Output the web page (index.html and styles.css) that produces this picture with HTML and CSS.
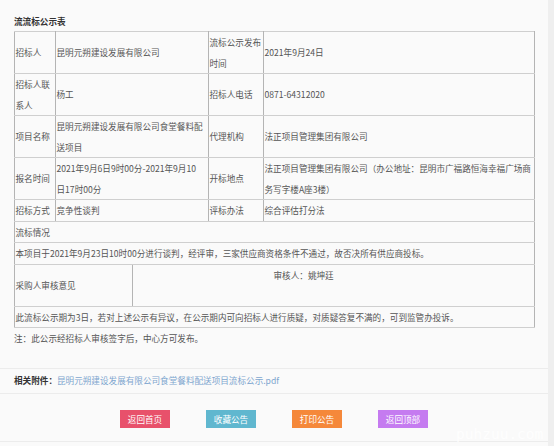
FILE: index.html
```html
<!DOCTYPE html>
<html lang="zh-CN">
<head>
<meta charset="utf-8">
<title>流流标公示表</title>
<link rel="stylesheet" href="styles.css">
</head>
<body>
<div class="page">
  <div class="content">
    <h2 class="title">流流标公示表</h2>
    <table class="notice">
      <colgroup>
        <col class="c1"><col class="c2"><col class="c3"><col class="c4">
      </colgroup>
      <tr>
        <td>招标人</td>
        <td>昆明元朔建设发展有限公司</td>
        <td>流标公示发布时间</td>
        <td>2021年9月24日</td>
      </tr>
      <tr>
        <td>招标人联系人</td>
        <td>杨工</td>
        <td>招标人电话</td>
        <td>0871-64312020</td>
      </tr>
      <tr>
        <td>项目名称</td>
        <td>昆明元朔建设发展有限公司食堂餐料配送项目</td>
        <td>代理机构</td>
        <td>法正项目管理集团有限公司</td>
      </tr>
      <tr>
        <td>报名时间</td>
        <td>2021年9月6日9时00分-2021年9月10<br>日17时00分</td>
        <td>开标地点</td>
        <td>法正项目管理集团有限公司（办公地址：昆明市广福路恒海幸福广场商务写字楼A座3楼）</td>
      </tr>
      <tr>
        <td>招标方式</td>
        <td>竞争性谈判</td>
        <td>评标办法</td>
        <td>综合评估打分法</td>
      </tr>
      <tr>
        <td colspan="4">流标情况</td>
      </tr>
      <tr>
        <td colspan="4">本项目于2021年9月23日10时00分进行谈判，经评审，三家供应商资格条件不通过，故否决所有供应商投标。</td>
      </tr>
      <tr>
        <td colspan="4" class="nest">
          <div class="review">
            <div class="review-label">采购人审核意见</div>
            <div class="review-body">审核人：姚坤廷</div>
          </div>
        </td>
      </tr>
      <tr>
        <td colspan="4">此流标公示期为3日，若对上述公示有异议，在公示期内可向招标人进行质疑，对质疑答复不满的，可到监管办投诉。</td>
      </tr>
    </table>
    <p class="note">注：此公示经招标人审核签字后，中心方可发布。</p>
  </div>
  <div class="attach">
    <span class="attach-label">相关附件：</span><a class="attach-link" href="#">昆明元朔建设发展有限公司食堂餐料配送项目流标公示.pdf</a>
  </div>
  <div class="actions">
    <a class="btn btn-red" href="#">返回首页</a>
    <a class="btn btn-blue" href="#">收藏公告</a>
    <a class="btn btn-orange" href="#">打印公告</a>
    <a class="btn btn-purple" href="#">返回顶部</a>
  </div>
  <div class="watermark">puhzuu.com</div>
</div>
</body>
</html>
```

FILE: styles.css
```css
html, body {
  margin: 0;
  padding: 0;
}
body {
  background: #efefef;
  font-family: "Noto Sans CJK SC", "Noto Sans", sans-serif;
  color: #555;
  font-size: 8.6px;
  overflow: hidden;
}
.page {
  position: relative;
  width: 548px;
  height: 446px;
  background: #fafafa;
  overflow: hidden;
}
.content {
  padding: 11px 0 0 14px;
}
.title {
  margin: 0;
  font-size: 8.6px;
  line-height: 20px;
  font-weight: bold;
  color: #333;
}
.notice {
  width: 520px;
  table-layout: fixed;
  border-collapse: collapse;
  border: 1px solid #7a7a7a;
}
.c1 { width: 41px; }
.c2 { width: 153px; }
.c3 { width: 55px; }
.c4 { width: 271px; }
.notice td {
  border: 1px solid #b4b4b4;
  border-top-color: #cfcfcf;
  border-bottom-color: #cfcfcf;
  padding: 0 0 0 0.5px;
  line-height: 20.5px;
  vertical-align: middle;
  color: #555;
  word-break: break-all;
}
.notice td.nest {
  padding: 0;
}
.review {
  display: flex;
}
.review-label {
  width: 116px;
  flex: none;
  border-right: 1px solid #b4b4b4;
  display: flex;
  align-items: center;
  padding-left: 0.5px;
  height: 41px;
}
.review-body {
  flex: 1;
  padding-left: 141px;
  line-height: 20.5px;
}
.note {
  margin: 0;
  line-height: 20px;
  color: #555;
}
.attach {
  margin-top: 20px;
  border-top: 1px solid #ececec;
  border-bottom: 1px solid #ececec;
  padding-left: 14px;
  line-height: 23px;
  height: 24px;
}
.attach-label {
  font-weight: bold;
  color: #333;
}
.attach-link {
  color: #7ea6cf;
  text-decoration: none;
}
.actions {
  display: flex;
  justify-content: center;
  gap: 36px;
  padding: 16px 0 13px;
  border-bottom: 1px solid #ececec;
}
.btn {
  display: block;
  width: 50px;
  height: 18px;
  line-height: 18px;
  text-align: center;
  color: #fff;
  text-decoration: none;
  font-size: 8.6px;
}
.btn-red { background: #e8516b; }
.btn-blue { background: #60b7cf; }
.btn-orange { background: #f5883a; }
.btn-purple { background: #c57bf0; }
.watermark {
  position: absolute;
  left: 456px;
  top: 424px;
  font-family: "DejaVu Sans Mono", monospace;
  font-size: 14.5px;
  line-height: 20px;
  color: rgba(255, 255, 255, 0.85);
  white-space: nowrap;
}
```
